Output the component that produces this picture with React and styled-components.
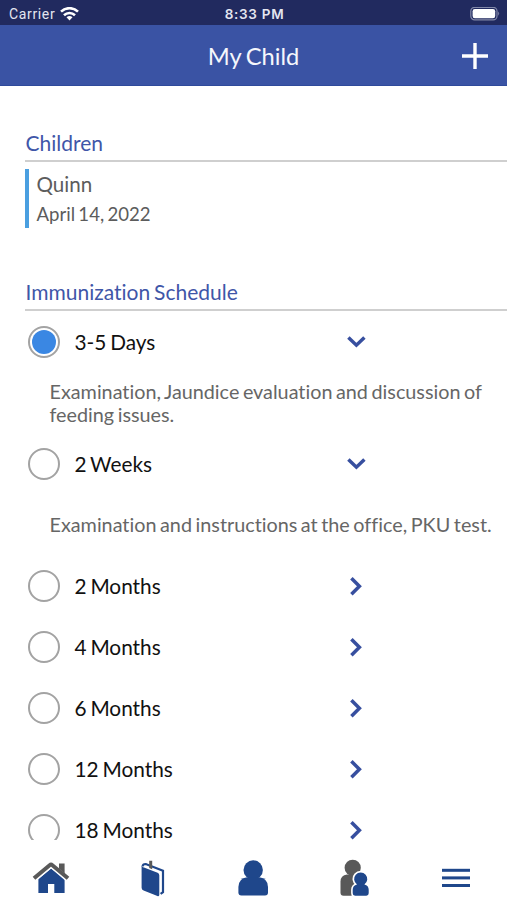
import React, { useState } from "react";
import styled, { createGlobalStyle } from "styled-components";

const GlobalStyle = createGlobalStyle`
  * {
    box-sizing: border-box;
  }
  body {
    margin: 0;
    background-color: #ffffff;
    font-family: Lato, "Liberation Sans", sans-serif;
    font-variant-ligatures: none;
    word-spacing: -1.5px;
  }
`;

const Screen = styled.div`
  display: flex;
  flex-direction: column;
  width: 100%;
  height: 100vh;
  overflow: hidden;
`;

const StatusBar = styled.div`
  display: grid;
  grid-template-columns: 1fr auto 1fr;
  align-items: center;
  flex: none;
  height: 25px;
  padding: 2px 7px 0 9px;
  background-color: #212a5f;
  color: #e4e6f0;
  font-family: Inter, "Liberation Sans", sans-serif;
  font-size: 13px;
  word-spacing: 0;
`;

const Carrier = styled.div`
  display: flex;
  align-items: center;
  gap: 5px;
  font-family: Roboto, "Liberation Sans", sans-serif;
  font-size: 14px;
  letter-spacing: 0.65px;
`;

const Clock = styled.span`
  font-size: 13.5px;
  font-weight: 600;
  letter-spacing: 0.7px;
`;

const BatteryIcon = styled.svg`
  justify-self: end;
`;

const Header = styled.header`
  display: grid;
  grid-template-columns: 1fr auto 1fr;
  align-items: center;
  flex: none;
  height: 61px;
  padding: 2px 18px 0 18px;
  background-color: #3a53a4;
  border-bottom: 1px solid #2f4a9b;
`;

const Title = styled.h1`
  grid-column: 2;
  margin: 0;
  color: #f5f7fc;
  font-size: 23.7px;
  font-weight: 400;
  line-height: 28px;
`;

const AddButton = styled.button`
  display: flex;
  justify-self: end;
  padding: 0;
  border: 0;
  background: none;
`;

const Content = styled.main`
  flex: 1;
  min-height: 0;
  overflow: hidden;
  padding-left: 25px;
`;

const SectionTitle = styled.h2`
  height: 76px;
  margin: 0;
  padding-top: 44px;
  padding-left: 0.5px;
  border-bottom: 2px solid #cfcfcf;
  color: #3f56a8;
  font-size: 21px;
  font-weight: 400;
  line-height: 26px;
`;

const ScheduleTitle = styled(SectionTitle)`
  height: 83px;
  padding-top: 51px;
`;

const Child = styled.div`
  height: 59px;
  margin-top: 7px;
  padding-left: 7.5px;
  border-left: 4px solid #4a9fe0;
  color: #5c5c5c;
`;

const ChildName = styled.div`
  font-size: 20.6px;
  line-height: 30px;
`;

const BirthDate = styled.div`
  font-size: 18.6px;
  line-height: 30px;
`;

const Visit = styled.div`
  display: grid;
  grid-template-columns: 49.5px 256.5px 50px;
  align-items: center;
  height: 61px;
  color: #111111;
  font-size: 20.8px;
`;

const VisitLabel = styled.span`
  line-height: 19px;
`;

const Radio = styled.button`
  display: flex;
  align-items: center;
  justify-content: center;
  width: 32px;
  height: 32px;
  margin-top: 1px;
  margin-left: 2.5px;
  padding: 0;
  border: 2px solid #a3a3a3;
  border-radius: 50%;
  background-color: #ffffff;

  &::after {
    content: "";
    width: 24px;
    height: 24px;
    border-radius: 50%;
    background-color: ${(props) => (props.$checked ? "#3a87e3" : "#ffffff")};
  }
`;

const Toggle = styled.button`
  display: flex;
  justify-content: center;
  padding: 0;
  border: 0;
  background: none;
`;

const Description = styled.p`
  display: flex;
  align-items: center;
  height: 61px;
  margin: 0;
  padding-left: 24.5px;
  color: #666666;
  font-size: 19.8px;
  line-height: 23px;
`;

const TabBar = styled.nav`
  display: grid;
  grid-template-columns: repeat(5, 1fr);
  flex: none;
  height: 60px;
  background-color: #ffffff;
`;

const Tab = styled.button`
  display: flex;
  align-items: center;
  justify-content: center;
  padding: 15px 0 0;
  border: 0;
  background: none;
`;

const visits = [
  {
    label: "3-5 Days",
    text: "Examination, Jaundice evaluation and discussion of feeding issues.",
  },
  {
    label: "2 Weeks",
    text: "Examination and instructions at the office, PKU test.",
  },
  { label: "2 Months" },
  { label: "4 Months" },
  { label: "6 Months" },
  { label: "12 Months" },
  { label: "18 Months" },
];

const Chevron = ({ open }) => (
  <svg width="20" height="20" viewBox="0 0 20 20">
    <path
      d={open ? "M2.4 5.6l8 7.6 8-7.6" : "M5.4 2.3l8 8-8 8"}
      fill="none"
      stroke="#374f9f"
      strokeWidth="3.5"
    />
  </svg>
);

const WifiIcon = () => (
  <svg width="19" height="14" viewBox="0 0 19 14">
    <g fill="none" stroke="#ffffff" strokeWidth="2.6">
      <path d="M1 4.6a12.3 12.3 0 0 1 17 0" />
      <path d="M4 8.2a8 8 0 0 1 11 0" />
    </g>
    <path d="M9.5 13.4l-3-3.1a4.4 4.4 0 0 1 6 0z" fill="#ffffff" />
  </svg>
);

const Battery = () => (
  <BatteryIcon width="30" height="14" viewBox="0 0 30 14">
    <rect
      x="0.8"
      y="0.3"
      width="26.2"
      height="12.6"
      rx="3.8"
      fill="none"
      stroke="#8288a8"
      strokeWidth="1.2"
    />
    <rect x="2.6" y="2" width="22.6" height="9.2" rx="2.2" fill="#ffffff" />
    <path d="M28.2 4.4q1.9 2.2 0 4.4z" fill="#8288a8" />
  </BatteryIcon>
);

const HomeIcon = () => (
  <svg width="38" height="38" viewBox="0 0 38 38">
    <path d="M27 4.5h5.6v11l-5.6-5z" fill="#595959" />
    <path d="M6.4 20L19.2 9.4 32.6 20v14H22.3v-9H16v9H6.4z" fill="#1f478b" />
    <path
      d="M2 20.6L17.6 7.3q1.4-1.1 2.8 0L36 20.6"
      fill="none"
      stroke="#ffffff"
      strokeWidth="5"
    />
    <path
      d="M2 19.2L17.6 6.2q1.4-1.1 2.8 0L36 19.2"
      fill="none"
      stroke="#595959"
      strokeWidth="4"
    />
  </svg>
);

const BookIcon = () => (
  <svg width="38" height="38" viewBox="0 0 38 38">
    <path
      d="M9.6 7.5q0-2.6 3.2-2.5L30 11.8v21.4l-2.4 1.6"
      fill="none"
      stroke="#1f478b"
      strokeWidth="2.2"
    />
    <path
      d="M8.6 7q.6 1 2.4 1.6l13.6 5.2q1.7.7 1.7 2.4v19.6q0 2-1.9 1.3L10.6 31.6q-2-.9-2-2.8z"
      fill="#1f478b"
    />
    <path d="M16.2 1.8h3v8.4l-3-1.1z" fill="#595959" />
  </svg>
);

const PersonIcon = () => (
  <svg width="38" height="38" viewBox="0 0 38 38" fill="#1f478b">
    <circle cx="19.2" cy="11" r="9.7" />
    <path d="M4.4 28q0-8.5 8.6-9.8h12.4q8.6 1.3 8.6 9.8v5.5q0 3-3 3H7.4q-3 0-3-3z" />
  </svg>
);

const FamilyIcon = () => (
  <svg width="38" height="38" viewBox="0 0 38 38">
    <g fill="#595959">
      <circle cx="16.7" cy="8.8" r="8.1" />
      <path d="M4.5 22.5q0-6 6.5-7h11l2 6v15.2H7.5q-3 0-3-3z" />
    </g>
    <g fill="#1f478b" stroke="#ffffff" strokeWidth="3.2" paintOrder="stroke">
      <path d="M16.7 30.8q0-4.2 4.3-5.3a6.6 6.6 0 1 1 7.4 0q4.3 1.1 4.3 5.3v3.5q0 2.4-2.4 2.4H19.1q-2.4 0-2.4-2.4z" />
    </g>
  </svg>
);

const MenuIcon = () => (
  <svg width="28" height="20" viewBox="0 0 28 20" fill="#1f478b">
    <rect y="0.8" width="28" height="3" />
    <rect y="8.4" width="28" height="3" />
    <rect y="16" width="28" height="3" />
  </svg>
);

function App() {
  const [selected, setSelected] = useState("3-5 Days");
  const [opened, setOpened] = useState(["3-5 Days", "2 Weeks"]);

  const toggleVisit = (label) => {
    setOpened(
      opened.includes(label)
        ? opened.filter((item) => item !== label)
        : [...opened, label]
    );
  };

  return (
    <Screen>
      <GlobalStyle />
      <StatusBar>
        <Carrier>
          Carrier
          <WifiIcon />
        </Carrier>
        <Clock>8:33 PM</Clock>
        <Battery />
      </StatusBar>
      <Header>
        <Title>My Child</Title>
        <AddButton aria-label="Add child">
          <svg width="28" height="28" viewBox="0 0 28 28">
            <path d="M14 1v26M1 14h26" stroke="#ffffff" strokeWidth="3.4" />
          </svg>
        </AddButton>
      </Header>
      <Content>
        <SectionTitle>Children</SectionTitle>
        <Child>
          <ChildName>Quinn</ChildName>
          <BirthDate>April 14, 2022</BirthDate>
        </Child>
        <ScheduleTitle>Immunization Schedule</ScheduleTitle>
        {visits.map(({ label, text }) => (
          <React.Fragment key={label}>
            <Visit>
              <Radio
                aria-label={label}
                $checked={selected === label}
                onClick={() => setSelected(label)}
              />
              <VisitLabel>{label}</VisitLabel>
              <Toggle
                aria-label={`Toggle ${label}`}
                onClick={() => toggleVisit(label)}
              >
                <Chevron open={opened.includes(label)} />
              </Toggle>
            </Visit>
            {text && opened.includes(label) && (
              <Description>{text}</Description>
            )}
          </React.Fragment>
        ))}
      </Content>
      <TabBar>
        <Tab aria-label="Home">
          <HomeIcon />
        </Tab>
        <Tab aria-label="Library">
          <BookIcon />
        </Tab>
        <Tab aria-label="Profile">
          <PersonIcon />
        </Tab>
        <Tab aria-label="My Child">
          <FamilyIcon />
        </Tab>
        <Tab aria-label="Menu">
          <MenuIcon />
        </Tab>
      </TabBar>
    </Screen>
  );
}

export default App;
